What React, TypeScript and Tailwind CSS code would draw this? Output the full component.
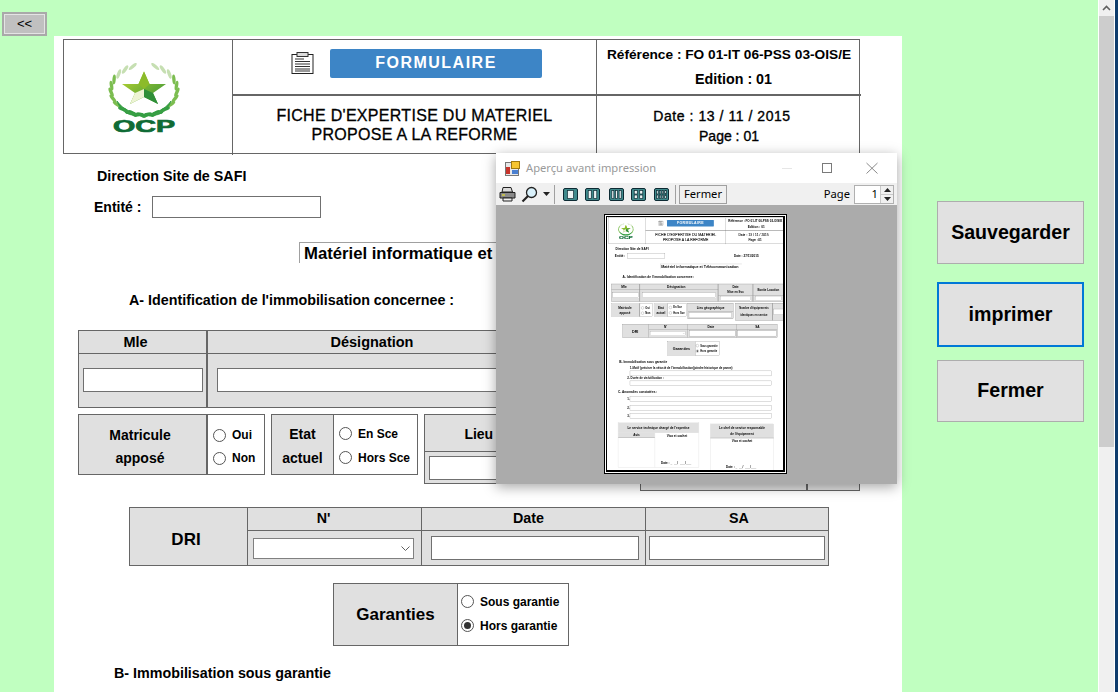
import React from "react";

const strong = "font-bold text-black";

function Logo() {
  const leaves: React.ReactNode[] = [];
  for (let i = 0; i < 13; i++) {
    const rot = -70 + i * 15;
    const a = rot * (Math.PI / 180);
    for (const side of [1, -1]) {
      const x = 36 + side * 33 * Math.cos(a);
      const y = 27 + 25 * Math.sin(a);
      leaves.push(
        <ellipse
          key={`${i}${side}`}
          cx={x}
          cy={y}
          rx={1.7}
          ry={5}
          transform={`rotate(${side * (rot + 20)} ${x} ${y})`}
          fill={i < 3 ? "#c6dfb2" : i < 8 ? "#7cbd50" : "#3aa045"}
        />
      );
    }
  }
  return (
    <svg width="72" height="70" viewBox="0 0 72 70" className="block">
      <defs>
        <linearGradient id="ocpg" x1="0" y1="0" x2="1" y2="1">
          <stop offset="0" stopColor="#c4d92e" />
          <stop offset="1" stopColor="#2e8f3a" />
        </linearGradient>
      </defs>
      {leaves}
      <path d="M9 38 C16 48 27 51 36 51 C45 51 56 48 63 38 C57 54 44 53 36 52.5 C28 53 15 54 9 38Z" fill="#3aa045" stroke="#2f9a3f" strokeWidth="0.8" />
      <polygon points="36,8.5 41.5,21 58,21 45,30 50,41 36,34 22,41 27,30 14,21 30.5,21" fill="url(#ocpg)" />
      <polygon points="36,8.5 41.5,21 36,26 30.5,21" fill="#8cbb2a" />
      <polygon points="36,26 45,30 50,41 36,34" fill="#2f8f38" />
      <polygon points="36,26 27,30 22,41 36,34" fill="#eef4d4" />
      <text x="36" y="68.5" textAnchor="middle" textLength="62" lengthAdjust="spacingAndGlyphs" fontFamily="'Liberation Sans',sans-serif" fontWeight="700" fontSize="16" fill="#0f6b35" stroke="#0f6b35" strokeWidth="0.7">OCP</text>
    </svg>
  );
}

function NoteIcon() {
  return (
    <svg width="23" height="22" viewBox="0 0 23 22" className="block">
      <rect x="1" y="2.5" width="21" height="19" fill="#fff" stroke="#222" />
      <rect x="6" y="0.5" width="11" height="4" fill="#ddd" stroke="#333" />
      <path d="M4 7h9M4 9.5h15M4 12h15M4 14.5h15M4 17h15M4 19h15" stroke="#333" strokeWidth="1" />
    </svg>
  );
}

function Radio({ checked, label }: { checked?: boolean; label: string }) {
  return (
    <div className={`flex items-center gap-[6px] text-[12px] leading-[18px] ${strong}`}>
      <span className="flex h-[13px] w-[13px] shrink-0 items-center justify-center rounded-full border border-[#555] bg-white">
        {checked ? <span className="h-[7px] w-[7px] rounded-full bg-[#333]" /> : null}
      </span>
      <span className="whitespace-nowrap">{label}</span>
    </div>
  );
}

function Field({ className }: { className: string }) {
  return <div className={`border border-[#707070] bg-white ${className}`} />;
}

function Form() {
  return (
    <div className="flex h-[1128px] w-[848px] flex-col bg-white pt-[3px] font-['Liberation_Sans',Arial,sans-serif] text-black">
      {/* header */}
      <div className="ml-[9px] grid h-[115px] w-[797px] shrink-0 grid-cols-[169px_364px_264px] grid-rows-[56px_59px] border border-[#666]">
        <div className="row-span-2 flex items-center justify-center border-r border-[#666] pr-[8px]">
          <Logo />
        </div>
        <div className="flex items-center border-r border-b-2 border-[#666] pb-[8px] pl-[58px]">
          <NoteIcon />
          <div className="ml-[16px] flex h-[29px] w-[212px] items-center justify-center rounded-[2px] bg-[#3d85c6] text-[16px] font-bold tracking-[1.5px] text-white">
            FORMULAIRE
          </div>
        </div>
        <div className="flex flex-col items-center border-b-2 border-[#666] pt-[5px] font-bold">
          <span className="h-[24px] text-[13.7px] leading-[20px] whitespace-nowrap">Référence : FO 01-IT 06-PSS 03-OIS/E</span>
          <span className="pl-[9px] text-[14.3px] leading-[20px]">Edition : 01</span>
        </div>
        <div className="flex flex-col items-center border-r border-[#666] pt-[10px] text-[16px] leading-[19px] tracking-[0.3px] [-webkit-text-stroke:0.3px_#000]">
          <span className="whitespace-nowrap">FICHE D'EXPERTISE DU MATERIEL</span>
          <span className="whitespace-nowrap">PROPOSE A LA REFORME</span>
        </div>
        <div className="flex flex-col items-center pt-[10px] text-[14px] leading-[20px] [-webkit-text-stroke:0.35px_#000]">
          <span className="pr-[14px] tracking-[0.55px] whitespace-nowrap">Date : 13 / 11 / 2015</span>
          <span>Page : 01</span>
        </div>
      </div>

      <div className={`mt-[12px] ml-[43px] h-[20px] shrink-0 text-[14.3px] leading-[20px] ${strong}`}>Direction Site de SAFI</div>

      <div className="mt-[10px] ml-[40px] flex h-[22px] shrink-0 items-center">
        <span className={`w-[58px] text-[14px] ${strong}`}>Entité :</span>
        <Field className="h-[22px] w-[169px]" />
        <span className={`ml-[312px] text-[14px] ${strong}`}>Date : 27/11/2015</span>
      </div>

      <div className={`mt-[24px] ml-[245px] h-[21px] w-[370px] shrink-0 border-t border-l border-[#a0a0a0] pl-[4px] text-[16.7px] leading-[21px] whitespace-nowrap ${strong}`}>
        Matériel informatique et Télécommunication
      </div>

      <div className={`mt-[28px] ml-[75px] h-[18px] shrink-0 text-[14.3px] leading-[18px] ${strong}`}>
        A- Identification de l'immobilisation concernee :
      </div>

      {/* table 1 */}
      <div className="mt-[21px] ml-[24px] grid h-[78px] w-[778px] shrink-0 grid-cols-[129px_354px_158px_137px] grid-rows-[23px_1fr] border border-[#666] bg-[#e0e0e0] text-[14.5px] font-bold">
        <div className="flex items-center justify-center border-r-2 border-b border-[#666] pt-[2px] pr-[14px]">Mle</div>
        <div className="flex items-center justify-center border-r-2 border-b border-[#666] pt-[2px] pr-[24px]">Désignation</div>
        <div className="row-span-2 flex flex-col border-r-2 border-[#666]">
          <div className="flex h-[50px] flex-col items-center justify-center border-b border-[#666] text-[13px]">
            <span>Date</span>
            <span>Mise en Svc</span>
          </div>
          <div className="flex flex-1 items-center justify-center">
            <Field className="h-[22px] w-[140px]" />
          </div>
        </div>
        <div className="row-span-2 flex flex-col">
          <div className="flex h-[50px] items-center justify-center border-b border-[#666] text-[13px]">Bonite Location</div>
          <div className="flex flex-1 items-center justify-center">
            <Field className="h-[22px] w-[120px]" />
          </div>
        </div>
        <div className="flex items-center border-r-2 border-[#666] pb-[2px] pl-[4px]">
          <Field className="h-[24px] w-[120px]" />
        </div>
        <div className="flex items-center border-r-2 border-[#666] pb-[2px] pl-[9px]">
          <Field className="h-[24px] w-[334px]" />
        </div>
      </div>

      {/* row 2 */}
      <div className="mt-[6px] ml-[24px] flex h-[77px] shrink-0 items-start">
        <div className="flex h-[61px] w-[187px] border border-[#666]">
          <div className="flex w-[129px] flex-col items-center justify-center gap-[6px] border-r-2 border-[#666] bg-[#e0e0e0] pt-[4px] pr-[5px] text-[14px] leading-[17px] font-bold">
            <span>Matricule</span>
            <span>apposé</span>
          </div>
          <div className="flex flex-1 flex-col justify-center gap-[5px] pt-[4px] pl-[5px]">
            <Radio label="Oui" />
            <Radio label="Non" />
          </div>
        </div>
        <div className="ml-[6px] flex h-[61px] w-[147px] border border-[#666]">
          <div className="flex w-[62px] flex-col items-center justify-center gap-[7px] border-r border-[#666] bg-[#e0e0e0] pt-[3px] text-[14px] leading-[17px] font-bold">
            <span>Etat</span>
            <span>actuel</span>
          </div>
          <div className="flex flex-1 flex-col justify-center gap-[6px] pt-[2px] pl-[5px]">
            <Radio label="En Sce" />
            <Radio label="Hors Sce" />
          </div>
        </div>
        <div className="ml-[6px] flex h-[70px] w-[206px] flex-col border border-[#666] bg-[#e0e0e0]">
          <div className="flex h-[37px] items-center justify-center border-b border-[#666] pt-[3px] text-[14px] font-bold">Lieu géographique</div>
          <div className="flex flex-1 items-center pl-[4px]">
            <Field className="h-[24px] w-[194px]" />
          </div>
        </div>
        <div className="ml-[10px] flex h-[77px] w-[220px] border border-[#666] bg-[#e0e0e0]">
          <div className="flex w-[167px] flex-col items-center justify-center gap-[12px] border-r-2 border-[#666] text-[12px] font-bold">
            <span>Nombre d'équipements</span>
            <span>identiques en service</span>
          </div>
          <div className="flex flex-1 items-center justify-center">
            <Field className="h-[26px] w-[44px]" />
          </div>
        </div>
      </div>

      {/* DRI */}
      <div className="mt-[16px] ml-[75px] grid h-[59px] w-[700px] shrink-0 grid-cols-[118px_174px_224px_1fr] grid-rows-[23px_1fr] border border-[#666] bg-[#e0e0e0] font-bold">
        <div className="row-span-2 flex items-center justify-center border-r border-[#666] pt-[6px] pr-[5px] text-[17px]">DRI</div>
        <div className="flex items-center justify-center border-r border-b border-[#666] pr-[22px] text-[14.3px]">N'</div>
        <div className="flex items-center justify-center border-r border-b border-[#666] pr-[10px] text-[14.3px]">Date</div>
        <div className="flex items-center justify-center border-b border-[#666] pl-[4px] text-[14.3px]">SA</div>
        <div className="flex items-center border-r border-[#666] pl-[5px]">
          <div className="flex h-[21px] w-[161px] items-center justify-end border border-[#808080] bg-white pr-[3px]">
            <svg width="9" height="5" viewBox="0 0 9 5"><path d="M0.5 0.5L4.5 4.5L8.5 0.5" fill="none" stroke="#606060" /></svg>
          </div>
        </div>
        <div className="flex items-center border-r border-[#666] pl-[9px]">
          <Field className="h-[24px] w-[208px]" />
        </div>
        <div className="flex items-center pl-[3px]">
          <Field className="h-[24px] w-[176px]" />
        </div>
      </div>

      {/* Garanties */}
      <div className="mt-[17px] ml-[279px] flex h-[63px] w-[236px] shrink-0 border border-[#666]">
        <div className="flex w-[124px] items-center justify-center border-r border-[#666] bg-[#e0e0e0] text-[17px] font-bold">Garanties</div>
        <div className="flex flex-1 flex-col justify-center gap-[6px] pb-[2px] pl-[3px]">
          <Radio label="Sous garantie" />
          <Radio checked label="Hors garantie" />
        </div>
      </div>

      <div className={`mt-[18px] ml-[60px] h-[18px] shrink-0 text-[14.3px] leading-[18px] ${strong}`}>B- Immobilisation sous garantie</div>

      <div className={`mt-[10px] ml-[108px] h-[18px] shrink-0 text-[13px] leading-[18px] whitespace-nowrap ${strong}`}>
        1-Motif (préciser la vétusté de l'immobilisation(joindre historique de panne)
      </div>
      <Field className="mt-[2px] ml-[108px] h-[23px] w-[643px] shrink-0" />
      <div className={`mt-[1px] ml-[96px] h-[18px] shrink-0 text-[13px] leading-[18px] ${strong}`}>2- Durée de vie/utilisation :</div>
      <Field className="mt-[2px] ml-[108px] h-[22px] w-[643px] shrink-0" />

      <div className={`mt-[17px] ml-[54px] h-[18px] shrink-0 text-[14.3px] leading-[18px] ${strong}`}>C- Anomalies constatées :</div>

      <div className={`mt-[13px] ml-[96px] flex h-[22px] shrink-0 items-center text-[13px] ${strong}`}>
        <span className="w-[12px]">1-</span>
        <Field className="h-[22px] w-[643px]" />
      </div>
      <div className={`mt-[17px] ml-[96px] flex h-[22px] shrink-0 items-center text-[13px] ${strong}`}>
        <span className="w-[12px]">2-</span>
        <Field className="h-[22px] w-[643px]" />
      </div>
      <div className={`mt-[13px] ml-[96px] flex h-[22px] shrink-0 items-center text-[13px] ${strong}`}>
        <span className="w-[12px]">3-</span>
        <Field className="h-[22px] w-[643px]" />
      </div>

      {/* signatures */}
      <div className="mt-[18px] ml-[54px] flex shrink-0 items-start">
        <div className="flex h-[197px] w-[367px] flex-col border border-[#c8c8c8] text-[14px] font-bold">
          <div className="flex h-[44px] items-center justify-center bg-[#e0e0e0]">Le service technique chargé de l'expertise</div>
          <div className="flex flex-1">
            <div className="flex w-[167px] flex-col border-r border-[#c8c8c8]">
              <div className="flex h-[22px] items-center justify-center border-b border-[#666] bg-[#e0e0e0]">Avis</div>
            </div>
            <div className="flex flex-1 flex-col items-center justify-between pt-[3px] pb-[10px]">
              <span>Visa et cachet</span>
              <span>Date : ____/____/____</span>
            </div>
          </div>
        </div>
        <div className="mt-[5px] ml-[50px] flex h-[210px] w-[289px] flex-col border border-[#c8c8c8] text-[14px] font-bold">
          <div className="flex h-[62px] flex-col items-center justify-center gap-[8px] border-b border-[#666] bg-[#e0e0e0]">
            <span>Le chef de service responsable</span>
            <span>de l'équipement</span>
          </div>
          <div className="flex flex-1 flex-col items-center justify-between pt-[3px] pb-[10px]">
            <span>Visa et cachet</span>
            <span>Date : ____/____/____</span>
          </div>
        </div>
      </div>
    </div>
  );
}

function PagesIcon({ cols, rows }: { cols: number; rows: number }) {
  const panes: React.ReactNode[] = [];
  const w = 11 / cols;
  const h = 9 / rows;
  for (let r = 0; r < rows; r++) {
    for (let c = 0; c < cols; c++) {
      panes.push(
        <rect
          key={`${r}-${c}`}
          x={2 + c * w + w * 0.22}
          y={2 + r * h + 0.5}
          width={w * 0.56}
          height={h - 1}
          fill="#eef4f4"
          stroke="#0d2a33"
          strokeWidth="0.7"
        />
      );
    }
  }
  return (
    <svg width="15" height="13" viewBox="0 0 15 13" className="block">
      <rect x="0.5" y="0.5" width="14" height="12" rx="1.5" fill="#3f8a8c" stroke="#0d2a33" />
      {panes}
    </svg>
  );
}

function Preview() {
  return (
    <div className="absolute top-[153px] left-[496px] flex h-[331px] w-[401px] flex-col bg-white font-['Noto_Sans',sans-serif] shadow-[0_3px_12px_rgba(0,0,0,0.35)]">
      <div className="flex h-[30px] shrink-0 items-center pl-[9px]">
        <svg width="15" height="15" viewBox="0 0 15 15" className="block">
          <rect x="0.5" y="1.5" width="13" height="13" fill="#e8e8e8" stroke="#777" />
          <rect x="6.5" y="0.5" width="8" height="7" fill="#f6c52f" stroke="#a07a10" />
          <rect x="1" y="6" width="4" height="7" fill="#c8342b" />
          <rect x="7" y="9" width="6" height="4" fill="#4a7fd0" />
        </svg>
        <span className="ml-[6px] text-[11.2px] text-[#9a9a9a]">Aperçu avant impression</span>
        <svg width="100" height="12" viewBox="0 0 100 12" className="mr-[15px] ml-auto block">
          <path d="M0 6.5H10" stroke="#e6e6e6" />
          <rect x="40.5" y="1.5" width="9" height="9" fill="none" stroke="#7a7a7a" />
          <path d="M84.5 1L95.5 11.5M95.5 1L84.5 11.5" stroke="#8a8a8a" fill="none" />
        </svg>
      </div>
      <div className="flex h-[22px] shrink-0 items-center bg-[#f0f0f0] pl-[3px] text-[11.2px] text-black">
        <svg width="17" height="16" viewBox="0 0 17 16" className="block">
          <path d="M4 1.5H12L13.5 6H3Z" fill="#dcdcdc" stroke="#222" />
          <path d="M1 6.5H16V12H1Z" fill="#8a8a8a" stroke="#222" />
          <path d="M3 9H6" stroke="#e8e030" strokeWidth="1.2" />
          <path d="M4 12H13V15H4Z" fill="#eee" stroke="#222" />
        </svg>
        <svg width="17" height="17" viewBox="0 0 17 17" className="ml-[5px] block">
          <circle cx="10.5" cy="6.5" r="5" fill="#d9f1fb" stroke="#222" strokeWidth="1.3" />
          <path d="M7 10L1.5 15.5" stroke="#222" strokeWidth="2.2" />
        </svg>
        <svg width="7" height="4" viewBox="0 0 7 4" className="ml-[5px] block"><path d="M0 0H7L3.5 4Z" fill="#222" /></svg>
        <span className="ml-[4px] h-[19px] w-px bg-[#a0a0a0]" />
        <span className="ml-[8px]"><PagesIcon cols={1} rows={1} /></span>
        <span className="ml-[7px]"><PagesIcon cols={2} rows={1} /></span>
        <span className="ml-[9px]"><PagesIcon cols={3} rows={1} /></span>
        <span className="ml-[7px]"><PagesIcon cols={2} rows={2} /></span>
        <span className="ml-[8px]"><PagesIcon cols={4} rows={2} /></span>
        <span className="ml-[6px] h-[19px] w-px bg-[#a0a0a0]" />
        <span className="ml-[3px] flex h-[19px] w-[48px] items-center justify-center border border-[#a0a0a0]">Fermer</span>
        <span className="ml-auto">Page</span>
        <div className="mr-[3px] ml-[4px] flex h-[19px] w-[40px] border border-[#b0b0b0] bg-white">
          <span className="flex-1 pr-[2px] text-right leading-[15px]">1</span>
          <div className="flex w-[13px] flex-col border-l border-[#c8c8c8] bg-[#f0f0f0]">
            <span className="flex flex-1 items-center justify-center border-b border-[#c8c8c8]">
              <svg width="7" height="4" viewBox="0 0 7 4"><path d="M3.5 0L7 4H0Z" fill="#222" /></svg>
            </span>
            <span className="flex flex-1 items-center justify-center">
              <svg width="7" height="4" viewBox="0 0 7 4"><path d="M0 0H7L3.5 4Z" fill="#222" /></svg>
            </span>
          </div>
        </div>
      </div>
      <div className="flex-1 overflow-hidden bg-[#ababab] pt-[9px] pl-[108px]">
        <div className="h-[260px] w-[183px] border border-black bg-white p-px">
          <div className="h-full overflow-hidden border-t border-r-2 border-b-2 border-l border-black">
            <div className="-ml-[1px] w-[848px] origin-top-left scale-x-[0.221] scale-y-[0.2275] blur-[0.5px]">
              <Form />
            </div>
          </div>
        </div>
      </div>
    </div>
  );
}

function SideButton({ label, focused, className }: { label: string; focused?: boolean; className: string }) {
  return (
    <button
      className={`flex w-[147px] items-center justify-center bg-[#e1e1e1] text-[19.6px] font-bold text-black ${focused ? "border-2 border-[#0078d7]" : "border border-[#adadad]"} ${className}`}
    >
      {label}
    </button>
  );
}

export default function App() {
  return (
    <div className="relative flex h-[692px] w-[1118px] overflow-hidden bg-[#c0ffc0] font-['Liberation_Sans',Arial,sans-serif]">
      <div className="w-[54px] shrink-0 pt-[12px] pl-[2px]">
        <button className="flex h-[24px] w-[45px] items-center justify-center border-2 border-[#a9a9a9] bg-[#c0c0c0] text-[13px] text-black shadow-[inset_0_0_0_1px_#e4e4e4]">
          &lt;&lt;
        </button>
      </div>
      <div className="h-[656px] w-[848px] shrink-0 self-end overflow-hidden">
        <Form />
      </div>
      <div className="flex w-[196px] shrink-0 flex-col pt-[201px] pl-[35px]">
        <SideButton label="Sauvegarder" className="h-[63px]" />
        <SideButton label="imprimer" focused className="mt-[18px] h-[65px]" />
        <SideButton label="Fermer" className="mt-[13px] h-[62px]" />
      </div>
      <div className="flex w-[20px] shrink-0 bg-white">
        <div className="ml-px flex w-[15px] flex-col bg-[#f0f0f0]">
          <div className="flex h-[16px] items-center justify-center">
            <svg width="9" height="6" viewBox="0 0 9 6"><path d="M1 5L4.5 1.5L8 5" fill="none" stroke="#606060" strokeWidth="1.6" /></svg>
          </div>
          <div className="h-[431px] bg-[#cdcdcd]" />
        </div>
        <div className="ml-px w-[3px] bg-[#0e3c6c]" />
      </div>
      <Preview />
    </div>
  );
}
